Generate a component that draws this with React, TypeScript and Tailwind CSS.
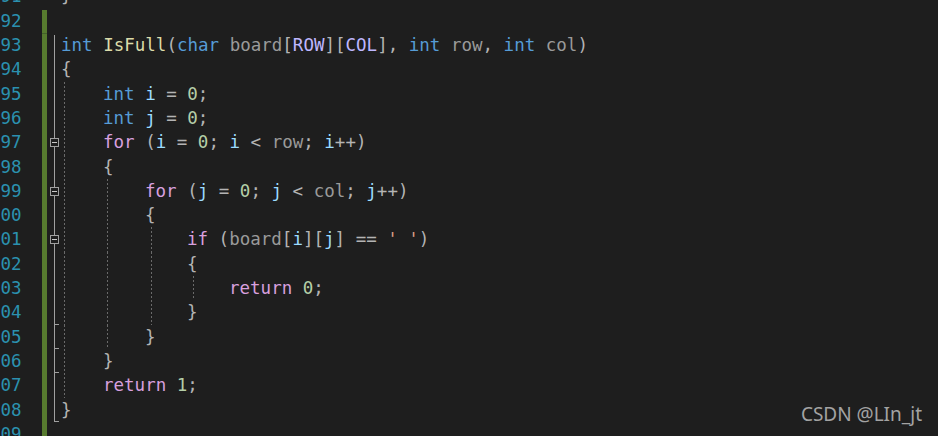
import React from 'react';

type Tok = [string, string];

const KW = '#569cd6';
const FN = '#dcdcaa';
const PU = '#b4b4b4';
const PA = '#9a9a9a';
const MA = '#beb7ff';
const LO = '#9cdcfe';
const NU = '#b5cea8';
const CT = '#d8a0df';
const CH = '#d69d85';

const p = (s: string): Tok => [s, PU];

interface Line {
  no: number;
  indent?: number;
  toks: Tok[];
  fold?: 'start' | 'mid' | 'box' | 'tick' | 'end';
  bar?: boolean;
}

// indentation guide offset for each nesting level
const guideCls = [
  'bg-[position:3px_0]',
  'bg-[position:4px_0]',
  'bg-[position:6px_0]',
  'bg-[position:6px_0]',
];

const lines: Line[] = [
  { no: 91, toks: [p('}')] },
  { no: 92, toks: [], bar: true },
  {
    no: 93,
    bar: true,
    fold: 'start',
    toks: [
      ['int', KW], p(' '), ['IsFull', FN], p('('), ['char', KW], p(' '), ['board', PA], p('['), ['ROW', MA], p(']['),
      ['COL', MA], p('], '), ['int', KW], p(' '), ['row', PA], p(', '), ['int', KW], p(' '), ['col', PA], p(')'),
    ],
  },
  { no: 94, bar: true, fold: 'mid', toks: [p('{')] },
  { no: 95, bar: true, fold: 'mid', indent: 1, toks: [['int', KW], p(' '), ['i', LO], p(' = '), ['0', NU], p(';')] },
  { no: 96, bar: true, fold: 'mid', indent: 1, toks: [['int', KW], p(' '), ['j', LO], p(' = '), ['0', NU], p(';')] },
  {
    no: 97,
    bar: true,
    fold: 'box',
    indent: 1,
    toks: [['for', CT], p(' ('), ['i', LO], p(' = '), ['0', NU], p('; '), ['i', LO], p(' < '), ['row', PA], p('; '), ['i', LO], p('++)')],
  },
  { no: 98, bar: true, fold: 'mid', indent: 1, toks: [p('{')] },
  {
    no: 99,
    bar: true,
    fold: 'box',
    indent: 2,
    toks: [['for', CT], p(' ('), ['j', LO], p(' = '), ['0', NU], p('; '), ['j', LO], p(' < '), ['col', PA], p('; '), ['j', LO], p('++)')],
  },
  { no: 100, bar: true, fold: 'mid', indent: 2, toks: [p('{')] },
  {
    no: 101,
    bar: true,
    fold: 'box',
    indent: 3,
    toks: [['if', CT], p(' ('), ['board', PA], p('['), ['i', LO], p(']['), ['j', LO], p('] == '), ["' '", CH], p(')')],
  },
  { no: 102, bar: true, fold: 'mid', indent: 3, toks: [p('{')] },
  { no: 103, bar: true, fold: 'mid', indent: 4, toks: [['return', CT], p(' '), ['0', NU], p(';')] },
  { no: 104, bar: true, fold: 'tick', indent: 3, toks: [p('}')] },
  { no: 105, bar: true, fold: 'tick', indent: 2, toks: [p('}')] },
  { no: 106, bar: true, fold: 'tick', indent: 1, toks: [p('}')] },
  { no: 107, bar: true, fold: 'mid', indent: 1, toks: [['return', CT], p(' '), ['1', NU], p(';')] },
  { no: 108, bar: true, fold: 'end', toks: [p('}')] },
  { no: 109, bar: true, toks: [] },
];

const seg = 'w-px bg-[#a0a0a0]';

const FoldCell: React.FC<{ kind?: Line['fold'] }> = ({ kind }) => (
  <div className="w-[14px] shrink-0 flex flex-col items-center">
    {kind === 'start' && <div className={`${seg} mt-[2px] flex-1`} />}
    {kind === 'mid' && <div className={`${seg} flex-1`} />}
    {kind === 'box' && (
      <>
        <div className={`${seg} h-[8px]`} />
        <div className="w-[9px] h-[9px] shrink-0 border border-[#a0a0a0] bg-[#1e1e1e] flex items-center justify-center">
          <div className="w-[5px] h-px bg-[#c8c8c8]" />
        </div>
        <div className={`${seg} flex-1`} />
      </>
    )}
    {(kind === 'tick' || kind === 'end') && (
      <>
        <div className={`${seg} flex-1`} />
        <div className="self-start ml-[7px] w-[5px] h-px bg-[#a0a0a0]" />
      </>
    )}
  </div>
);

export default function App() {
  return (
    <div className="relative w-[938px] h-[436px] overflow-hidden bg-[#1e1e1e]">
      <div
        className="mt-[-15.8px] text-[17.5px] whitespace-pre"
        style={{ fontFamily: '"DejaVu Sans Mono", "Liberation Mono", monospace' }}
      >
        {lines.map((ln) => (
          <div key={ln.no} className="flex h-[24.33px] leading-[24.33px]">
            <div className="w-[32px] ml-[-10.5px] shrink-0 text-right text-[#2b91af]">{ln.no}</div>
            <div className="w-[20.5px] shrink-0" />
            <div
              className={`w-[5px] shrink-0 ${ln.bar ? 'bg-[#577b2f]' : ''} ${ln.no === 92 ? 'mt-[1.5px]' : ''} ${
                ln.no === 93 ? 'border-t border-[#44612a]' : ''
              }`}
            />
            <FoldCell kind={ln.fold} />
            <div className="flex-1 flex">
              {Array.from({ length: ln.indent ?? 0 }).map((_, i) => (
                <span
                  key={i}
                  className={`w-[42px] h-full shrink-0 bg-repeat-y bg-[length:1px_4px] bg-[linear-gradient(to_bottom,#6a6a6a_50%,transparent_50%)] ${guideCls[i]}`}
                />
              ))}
              <span>
                {ln.toks.map(([s, c], i) => (
                  <span key={i} style={{ color: c }}>
                    {s}
                  </span>
                ))}
              </span>
            </div>
          </div>
        ))}
      </div>
      <div
        className="absolute right-[16px] bottom-[9px] text-[19px] leading-[26px] text-[#a3a3a3]"
        style={{ fontFamily: '"Noto Sans", "Open Sans", sans-serif' }}
      >
        CSDN @LIn_jt
      </div>
    </div>
  );
}
